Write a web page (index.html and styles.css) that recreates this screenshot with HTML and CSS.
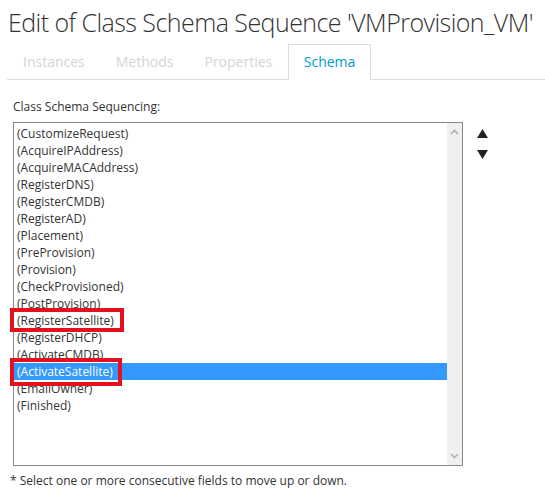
FILE: index.html
```html
<!DOCTYPE html>
<html>
<head>
<meta charset="utf-8">
<link rel="stylesheet" href="styles.css">
</head>
<body>
<div class="page">
  <h1 class="title">Edit of Class Schema Sequence 'VMProvision_VM'</h1>
  <ul class="tabs">
    <li class="tab">Instances</li>
    <li class="tab">Methods</li>
    <li class="tab">Properties</li>
    <li class="tab active">Schema</li>
  </ul>
  <div class="content">
    <div class="label">Class Schema Sequencing:</div>
    <div class="editor">
      <div class="listbox">
        <div class="options">
          <div class="opt">(CustomizeRequest)</div>
          <div class="opt">(AcquireIPAddress)</div>
          <div class="opt">(AcquireMACAddress)</div>
          <div class="opt">(RegisterDNS)</div>
          <div class="opt">(RegisterCMDB)</div>
          <div class="opt">(RegisterAD)</div>
          <div class="opt">(Placement)</div>
          <div class="opt">(PreProvision)</div>
          <div class="opt">(Provision)</div>
          <div class="opt">(CheckProvisioned)</div>
          <div class="opt">(PostProvision)</div>
          <div class="opt">(RegisterSatellite)</div>
          <div class="opt">(RegisterDHCP)</div>
          <div class="opt">(ActivateCMDB)</div>
          <div class="opt selected">(ActivateSatellite)</div>
          <div class="opt">(EmailOwner)</div>
          <div class="opt">(Finished)</div>
        </div>
        <div class="scrollbar">
          <svg class="chev" width="9" height="6" viewBox="0 0 9 6"><path d="M1 5 L4.5 1.5 L8 5" fill="none" stroke="#b0b0b0" stroke-width="1.6"/></svg>
          <svg class="chev" width="9" height="6" viewBox="0 0 9 6"><path d="M1 1 L4.5 4.5 L8 1" fill="none" stroke="#b0b0b0" stroke-width="1.6"/></svg>
        </div>
        <div class="mark mark-1"></div>
        <div class="mark mark-2"></div>
      </div>
      <div class="movers">
        <svg width="11" height="9" viewBox="0 0 11 9"><path d="M5.5 0 L11 9 L0 9 Z" fill="#222"/></svg>
        <svg width="11" height="9" viewBox="0 0 11 9"><path d="M0 0 L11 0 L5.5 9 Z" fill="#222"/></svg>
      </div>
    </div>
    <div class="note">* Select one or more consecutive fields to move up or down.</div>
  </div>
</div>
</body>
</html>
```

FILE: styles.css
```css
html, body {
  margin: 0;
  padding: 0;
  background: #fff;
}
body {
  font-family: "Open Sans", "Liberation Sans", sans-serif;
  color: #333;
}
.page {
  padding: 4px 0 0 7px;
}
.title {
  margin: 0 0 0 1px;
  font-size: 25px;
  letter-spacing: -0.55px;
  font-weight: 300;
  line-height: 36px;
  color: #333;
  white-space: nowrap;
}
.tabs {
  list-style: none;
  margin: 4px 0 0 0;
  padding: 0;
  display: flex;
  border-bottom: 1px solid #ddd;
  height: 35px;
}
.tab {
  padding: 0 14.5px;
  line-height: 34px;
  font-size: 14px;
  color: #d4d4d4;
  border: 1px solid transparent;
  border-bottom: none;
}
.tab:first-child {
  padding-left: 15px;
}
.tab.active {
  color: #0099d3;
  border-color: #ddd;
  background: #fff;
  margin-bottom: -1px;
  height: 35px;
  padding: 0 15px;
}
.content {
  padding: 18px 0 0 6px;
}
.label {
  font-size: 12px;
  line-height: 17px;
  margin-bottom: 7px;
}
.editor {
  display: flex;
  align-items: flex-start;
  gap: 14px;
}
.listbox {
  position: relative;
  width: 448px;
  height: 342px;
  border: 1px solid #888;
  display: flex;
}
.options {
  flex: 1;
  padding-top: 2px;
}
.opt {
  font-size: 12px;
  line-height: 17px;
  height: 17px;
  padding-left: 3px;
  color: #333;
  white-space: nowrap;
}
.opt.selected {
  background: #3399ff;
  color: #fff;
}
.scrollbar {
  width: 15px;
  background: #f0f0f0;
  display: flex;
  flex-direction: column;
  justify-content: space-between;
  align-items: center;
  padding: 6px 0 6px;
}
.mark {
  position: absolute;
  border: 4px solid #e3101e;
}
.mark-1 {
  left: -4px;
  top: 185px;
  width: 106px;
  height: 16px;
}
.mark-2 {
  left: -4px;
  top: 235px;
  width: 104px;
  height: 20px;
}
.movers {
  display: flex;
  flex-direction: column;
  gap: 12px;
  padding-top: 7px;
}
.note {
  font-size: 12px;
  line-height: 17px;
  margin: 6px 0 0 -3px;
}
```
